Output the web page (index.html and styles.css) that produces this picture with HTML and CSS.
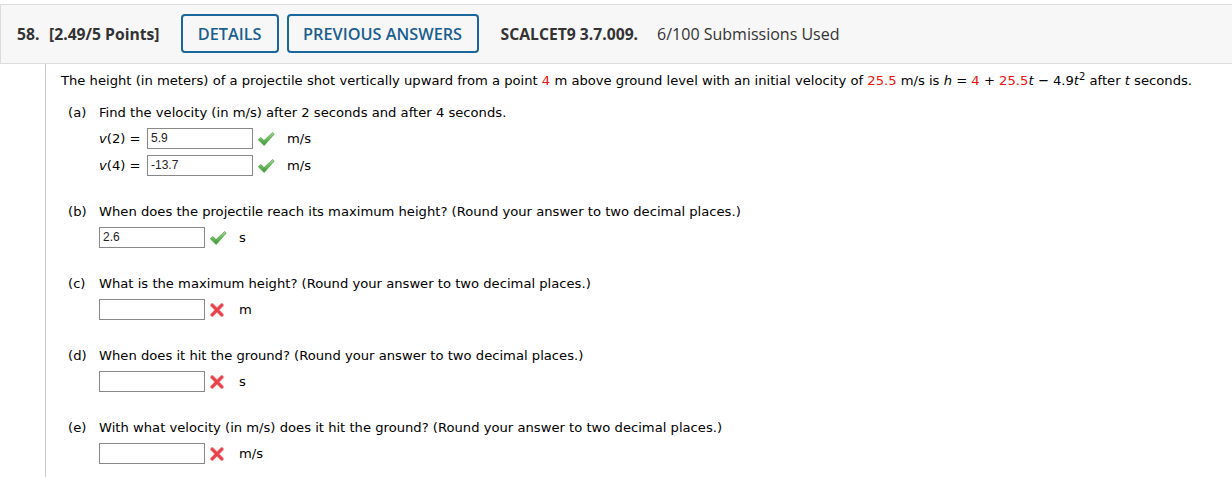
FILE: index.html
```html
<!DOCTYPE html>
<html>
<head>
<meta charset="utf-8">
<link rel="stylesheet" href="styles.css">
</head>
<body>
<div class="header">
  <span class="qnum">58.</span>
  <span class="points">[2.49/5 Points]</span>
  <span class="btn btn-details">DETAILS</span>
  <span class="btn btn-prev">PREVIOUS ANSWERS</span>
  <span class="code">SCALCET9 3.7.009.</span>
  <span class="subs">6/100 Submissions Used</span>
</div>
<div class="content">
  <p class="intro">The height (in meters) of a projectile shot vertically upward from a point <span class="red">4</span> m above ground level with an initial velocity of <span class="red">25.5</span> m/s is <i>h</i> = <span class="red">4</span> + <span class="red">25.5</span><i>t</i> &minus; 4.9<i>t</i><sup>2</sup> after <i>t</i> seconds.</p>

  <div class="part part-a">
    <div class="qline"><span class="lbl">(a)</span><span>Find the velocity (in m/s) after 2 seconds and after 4 seconds.</span></div>
    <div class="arow"><span class="vlabel"><i>v</i>(2) = </span><span class="inp">5.9</span><span class="mark"><svg width="18" height="16" viewBox="0 0 18 16"><defs><linearGradient id="g1" x1="0" y1="0" x2="0" y2="1"><stop offset="0" stop-color="#9ad886"/><stop offset="1" stop-color="#3c9637"/></linearGradient></defs><path d="M1.2 8.8 L4 6.4 L7 9.6 L15.6 1.4 L17.2 3.2 L7.2 14.6 Z" fill="url(#g1)" stroke="#4a9a42" stroke-width="0.6" stroke-linejoin="round"/></svg></span><span class="unit">m/s</span></div>
    <div class="arow"><span class="vlabel"><i>v</i>(4) = </span><span class="inp">-13.7</span><span class="mark"><svg width="18" height="16" viewBox="0 0 18 16"><path d="M1.2 8.8 L4 6.4 L7 9.6 L15.6 1.4 L17.2 3.2 L7.2 14.6 Z" fill="url(#g1)" stroke="#4a9a42" stroke-width="0.6" stroke-linejoin="round"/></svg></span><span class="unit">m/s</span></div>
  </div>

  <div class="part">
    <div class="qline"><span class="lbl">(b)</span><span>When does the projectile reach its maximum height? (Round your answer to two decimal places.)</span></div>
    <div class="arow"><span class="inp">2.6</span><span class="mark"><svg width="18" height="16" viewBox="0 0 18 16"><path d="M1.2 8.8 L4 6.4 L7 9.6 L15.6 1.4 L17.2 3.2 L7.2 14.6 Z" fill="url(#g1)" stroke="#4a9a42" stroke-width="0.6" stroke-linejoin="round"/></svg></span><span class="unit">s</span></div>
  </div>

  <div class="part">
    <div class="qline"><span class="lbl">(c)</span><span>What is the maximum height? (Round your answer to two decimal places.)</span></div>
    <div class="arow"><span class="inp"></span><span class="mark x"><svg width="14" height="14" viewBox="0 0 14 14"><path d="M2.2 2.2 L11.8 11.8 M11.8 2.2 L2.2 11.8" stroke="#f48a90" stroke-width="4" stroke-linecap="round"/><path d="M2.2 2.2 L11.8 11.8 M11.8 2.2 L2.2 11.8" stroke="#e8414c" stroke-width="2.6" stroke-linecap="round"/></svg></span><span class="unit">m</span></div>
  </div>

  <div class="part">
    <div class="qline"><span class="lbl">(d)</span><span>When does it hit the ground? (Round your answer to two decimal places.)</span></div>
    <div class="arow"><span class="inp"></span><span class="mark x"><svg width="14" height="14" viewBox="0 0 14 14"><path d="M2.2 2.2 L11.8 11.8 M11.8 2.2 L2.2 11.8" stroke="#f48a90" stroke-width="4" stroke-linecap="round"/><path d="M2.2 2.2 L11.8 11.8 M11.8 2.2 L2.2 11.8" stroke="#e8414c" stroke-width="2.6" stroke-linecap="round"/></svg></span><span class="unit">s</span></div>
  </div>

  <div class="part">
    <div class="qline"><span class="lbl">(e)</span><span>With what velocity (in m/s) does it hit the ground? (Round your answer to two decimal places.)</span></div>
    <div class="arow"><span class="inp"></span><span class="mark x"><svg width="14" height="14" viewBox="0 0 14 14"><path d="M2.2 2.2 L11.8 11.8 M11.8 2.2 L2.2 11.8" stroke="#f48a90" stroke-width="4" stroke-linecap="round"/><path d="M2.2 2.2 L11.8 11.8 M11.8 2.2 L2.2 11.8" stroke="#e8414c" stroke-width="2.6" stroke-linecap="round"/></svg></span><span class="unit">m/s</span></div>
  </div>
</div>
</body>
</html>
```
FILE: styles.css
```css
html, body {
  margin: 0;
  padding: 0;
  background: #fff;
}
body {
  width: 1232px;
  height: 477px;
  overflow: hidden;
}
.header {
  margin-top: 4px;
  height: 58px;
  background: #f7f7f7;
  border-top: 1px solid #dcdcdc;
  border-bottom: 1px solid #dcdcdc;
  border-left: 1px solid #dcdcdc;
  display: flex;
  align-items: center;
  padding-left: 16px;
  font-family: "Open Sans", sans-serif;
  font-size: 15.7px;
  color: #333;
}
.qnum {
  font-weight: 700;
  width: 32px;
}
.points {
  font-weight: 700;
  margin-right: 21px;
}
.btn {
  box-sizing: border-box;
  height: 39px;
  margin-top: -1px;
  border: 2px solid #1a679c;
  border-radius: 4px;
  color: #1b5e90;
  font-size: 16.3px;
  font-weight: 600;
  display: flex;
  align-items: center;
  justify-content: center;
}
.btn-details {
  width: 98px;
  margin-right: 8px;
}
.btn-prev {
  width: 192px;
  margin-right: 22px;
}
.code {
  font-weight: 700;
  margin-right: 19px;
}
.subs {
  font-weight: 400;
  font-size: 16px;
}
.content {
  margin-left: 45px;
  border-left: 1px solid #cccccc;
  padding-left: 15px;
  padding-top: 8px;
  font-family: "DejaVu Sans", Verdana, sans-serif;
  font-size: 13.15px;
  color: #000;
  height: 420px;
}
.intro {
  margin: 0;
  line-height: 18px;
  height: 31px;
}
.intro sup {
  font-size: 10px;
  line-height: 0;
  vertical-align: 5px;
}
.red {
  color: #ee1111;
}
.part {
  padding-left: 7px;
  height: 72px;
}
.part-a {
  height: 99px;
}
.qline {
  display: flex;
  height: 18px;
  align-items: center;
  margin-bottom: 4px;
}
.lbl {
  width: 31px;
}
.arow {
  display: flex;
  align-items: center;
  padding-left: 31px;
  height: 27px;
}
.vlabel {
  width: 48px;
  white-space: pre;
}
.inp {
  box-sizing: border-box;
  width: 106px;
  height: 21px;
  border: 1px solid #888;
  font-family: "Liberation Sans", Arial, sans-serif;
  font-size: 12px;
  line-height: 19px;
  padding-left: 3px;
  color: #222;
}
.mark {
  width: 34px;
  display: flex;
  align-items: center;
  padding-left: 4px;
  box-sizing: border-box;
}
.mark.x {
  padding-left: 5px;
}
```
